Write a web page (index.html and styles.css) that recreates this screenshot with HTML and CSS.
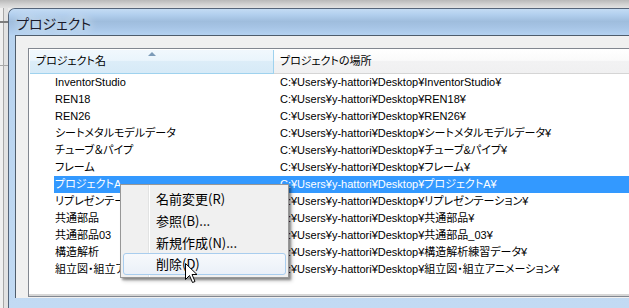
FILE: index.html
```html
<!DOCTYPE html>
<html lang="ja">
<head>
    <meta charset="UTF-8">
    <meta name="viewport" content="width=device-width, initial-scale=1.0">
    <title>プロジェクト</title>
    <link rel="stylesheet" href="styles.css">
</head>
<body>
    <div class="screen">
        <div class="sky"></div>
        <div class="stage">
            <div class="desk"></div>
            <div class="window">
                <div class="titlebar"><span class="title">プロジェクト</span></div>
                <div class="frame">
                    <div class="client">
                        <div class="listview">
                            <div class="header">
                                <div class="hcol hname">プロジェクト名<span class="sort-arrow"></span></div>
                                <div class="hcol hpath">プロジェクトの場所</div>
                            </div>
                            <div class="rows">
                                <div class="row"><div class="cells"><span class="name">InventorStudio</span><span class="path">C:¥Users¥y-hattori¥Desktop¥InventorStudio¥</span></div></div>
                                <div class="row"><div class="cells"><span class="name">REN18</span><span class="path">C:¥Users¥y-hattori¥Desktop¥REN18¥</span></div></div>
                                <div class="row"><div class="cells"><span class="name">REN26</span><span class="path">C:¥Users¥y-hattori¥Desktop¥REN26¥</span></div></div>
                                <div class="row"><div class="cells"><span class="name">シートメタルモデルデータ</span><span class="path">C:¥Users¥y-hattori¥Desktop¥シートメタルモデルデータ¥</span></div></div>
                                <div class="row"><div class="cells"><span class="name">チューブ＆パイプ</span><span class="path">C:¥Users¥y-hattori¥Desktop¥チューブ&amp;パイプ¥</span></div></div>
                                <div class="row"><div class="cells"><span class="name">フレーム</span><span class="path">C:¥Users¥y-hattori¥Desktop¥フレーム¥</span></div></div>
                                <div class="row selected"><div class="cells"><span class="name">プロジェクトA</span><span class="path">C:¥Users¥y-hattori¥Desktop¥プロジェクトA¥</span></div></div>
                                <div class="row"><div class="cells"><span class="name">リプレゼンテーション</span><span class="path">C:¥Users¥y-hattori¥Desktop¥リプレゼンテーション¥</span></div></div>
                                <div class="row"><div class="cells"><span class="name">共通部品</span><span class="path">C:¥Users¥y-hattori¥Desktop¥共通部品¥</span></div></div>
                                <div class="row"><div class="cells"><span class="name">共通部品03</span><span class="path">C:¥Users¥y-hattori¥Desktop¥共通部品_03¥</span></div></div>
                                <div class="row"><div class="cells"><span class="name">構造解析</span><span class="path">C:¥Users¥y-hattori¥Desktop¥構造解析練習データ¥</span></div></div>
                                <div class="row"><div class="cells"><span class="name">組立図・組立アニメーション</span><span class="path">C:¥Users¥y-hattori¥Desktop¥組立図・組立アニメーション¥</span></div></div>
                            </div>
                        </div>
                    </div>
                </div>
            </div>
        </div>

        <!-- context menu over the selected row -->
        <div class="menu">
            <div class="item">名前変更(R)</div>
            <div class="item">参照(B)...</div>
            <div class="item">新規作成(N)...</div>
            <div class="item hover">削除(D)</div>
        </div>
        <svg class="cursor" xmlns="http://www.w3.org/2000/svg" viewBox="0 0 13 21" width="13" height="21">
            <path d="M0.5 0.5 L0.5 16.5 L4.5 12.5 L7.5 19.5 L10 18.5 L7 11.5 L12 11.5 Z" fill="#fff" stroke="#000" stroke-width="1" stroke-linejoin="miter"/>
        </svg>
    </div>
</body>
</html>
```

FILE: styles.css
```css
html, body {
    margin: 0;
    padding: 0;
}
body {
    width: 629px;
    height: 308px;
    overflow: hidden;
    background-color: #ececec;
}
.screen {
    position: relative;
    width: 629px;
    height: 308px;
    display: flex;
    flex-direction: column;
    overflow: hidden;
}
.sky {
    height: 8px;
    flex-shrink: 0;
    background: linear-gradient(to bottom, #b9b9b9, #d4d4d4 60%, #e2e2e2);
}
.stage {
    flex: 1;
    display: flex;
    min-height: 0;
}
.desk {
    width: 8px;
    flex-shrink: 0;
    background:
        linear-gradient(to bottom, transparent 13px, #7d7d7d 13px, #7d7d7d 15px, transparent 15px, transparent 57px, #a8a8a8 57px, #a8a8a8 58px, transparent 58px),
        linear-gradient(to right, #f0f0f0 3px, #a8a8a8 3px, #a8a8a8 4px, #e2e2e2 4px);
}
.window {
    flex: 1;
    display: flex;
    flex-direction: column;
    border-top: 1px solid #55657a;
    border-left: 1px solid #55657a;
    border-top-left-radius: 7px;
    background-color: #bcd5ef;
    overflow: hidden;
}
.titlebar {
    height: 26px;
    flex-shrink: 0;
    display: flex;
    align-items: center;
    padding-left: 7px;
    background: linear-gradient(to bottom, #c4dcf4 0%, #b2cfee 22%, #9fbddd 48%, #a6c4e5 70%, #b5d2f1 100%);
}
.title {
    font-family: "Noto Sans CJK JP", sans-serif;
    font-size: 14px;
    font-feature-settings: "palt";
    color: #1a1a2a;
    text-shadow: 0 0 8px #eef5fc, 0 0 12px #eef5fc;
    margin-top: 1px;
}
.frame {
    flex: 1;
    display: flex;
    padding-left: 6px;
    background: linear-gradient(to bottom, #b8d3ef, #c2daf3);
}
.client {
    flex: 1;
    border-top: 1px solid #4f5d6c;
    border-left: 1px solid #4f5d6c;
    background-color: #f0f0f0;
    padding: 12px 0 0 12px;
    height: 250px;
}
.listview {
    width: 680px;
    height: 246px;
    border: 1px solid #828790;
    border-right: none;
    padding: 1px 0 0 1px;
    background-color: #fff;
    box-shadow: inset 0 -2px 0 #d6d6d6;
    font-family: "Liberation Sans", "Noto Sans CJK JP", sans-serif;
    font-size: 11px;
    font-feature-settings: "palt";
    color: #000;
}
.header {
    display: flex;
    height: 24px;
}
.hcol {
    box-sizing: border-box;
    height: 24px;
    line-height: 23px;
    padding-left: 6px;
    white-space: nowrap;
}
.hname {
    position: relative;
    width: 244px;
    background: linear-gradient(to bottom, #f1f8fd 0%, #eaf5fc 45%, #dcedf8 50%, #d6eaf7 100%);
    border-right: 1px solid #9fd2ee;
    border-bottom: 1px solid #9fd2ee;
}
.hpath {
    flex: 1;
    background: linear-gradient(to bottom, #ffffff 0%, #fafafa 45%, #f2f2f3 50%, #f0f0f1 100%);
    border-bottom: 1px solid #d5d5d5;
}
.sort-arrow {
    position: absolute;
    left: 118px;
    top: 2px;
    width: 0;
    height: 0;
    border-left: 4px solid transparent;
    border-right: 4px solid transparent;
    border-bottom: 4px solid #7c9bb8;
}
.rows {
    display: flex;
    flex-direction: column;
}
.row {
    height: 17px;
    line-height: 17px;
    padding-left: 24px;
    white-space: nowrap;
}
.cells {
    display: flex;
}
.name {
    width: 219px;
    padding-left: 1px;
    overflow: hidden;
}
.path {
    padding-left: 6px;
    flex: 1;
}
.selected .cells {
    background-color: #3399ff;
    color: #fff;
}
.menu {
    position: absolute;
    left: 120px;
    top: 184px;
    width: 163px;
    padding: 2px;
    border: 1px solid #979797;
    background:
        linear-gradient(to right, transparent 27px, #e2e3e3 27px, #e2e3e3 28px, #ffffff 28px, #ffffff 29px, transparent 29px),
        #f0f0f0;
    box-shadow: 2px 2px 2px rgba(0, 0, 0, 0.35), 3px 3px 4px rgba(0, 0, 0, 0.2);
    font-family: "Noto Sans CJK JP", sans-serif;
    font-size: 13px;
    color: #000;
}
.item {
    height: 22px;
    line-height: 22px;
    padding-left: 32px;
    box-sizing: border-box;
    border: 1px solid transparent;
    border-radius: 3px;
}
.item.hover {
    border-color: #a9cdee;
    background: linear-gradient(to bottom, #f7f9fc, #eaf0f8);
    line-height: 20px;
}
.cursor {
    position: absolute;
    left: 185px;
    top: 263px;
}
```
